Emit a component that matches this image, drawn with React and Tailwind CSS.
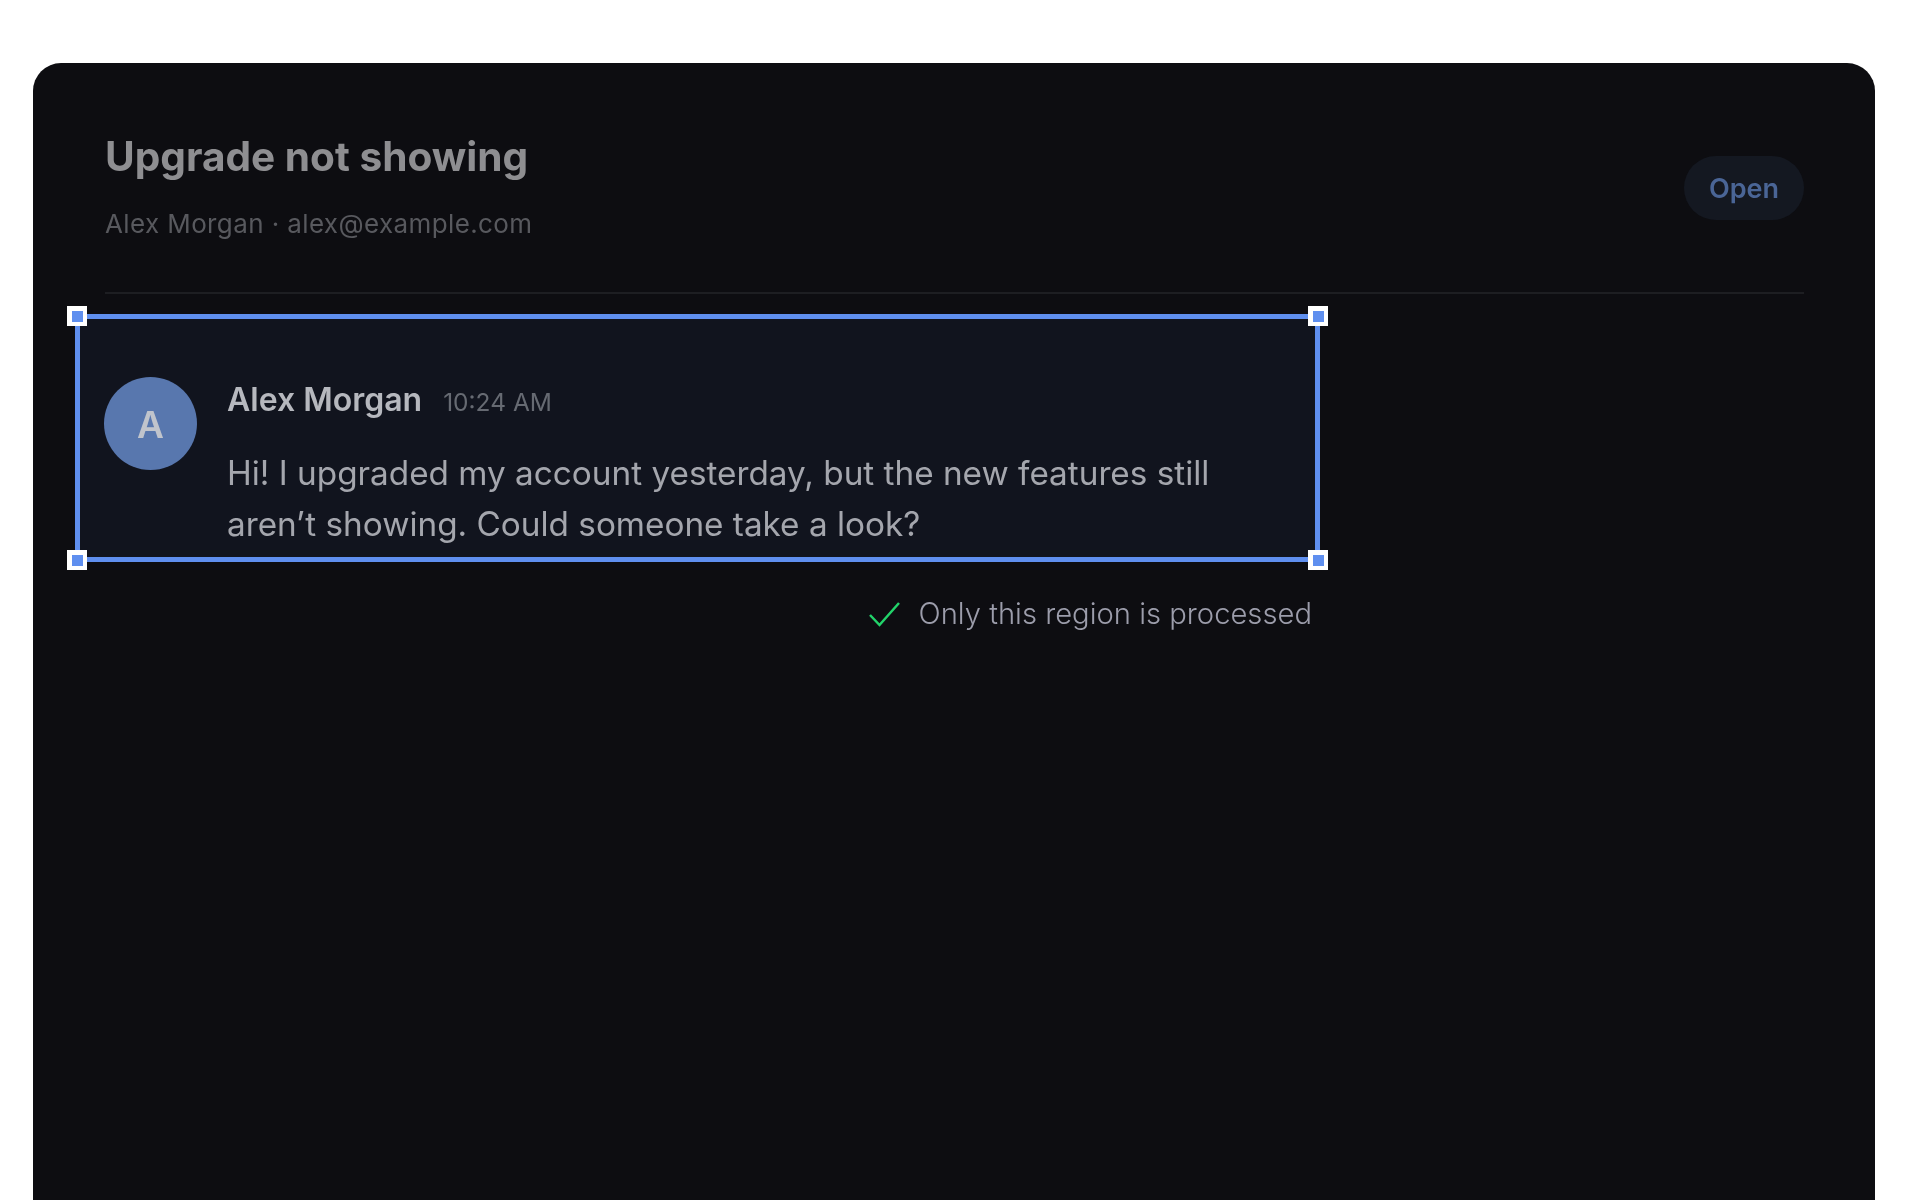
const font = { fontFamily: '"Inter", "Liberation Sans", sans-serif' };

function Handle({ className }) {
  return (
    <span className={`absolute flex h-5 w-5 items-center justify-center bg-white ${className}`}>
      <span className="h-[11px] w-[11px] bg-[#5f8fef]" />
    </span>
  );
}

export default function App() {
  return (
    <div style={font} className="h-[1200px] overflow-hidden bg-white pl-[33px] pr-[45px] pt-[63px] antialiased">
      <div className="h-[1137px] rounded-t-[28px] bg-[#0d0d11] pl-[72px] pr-[71px] pt-[70px] blur-[0.5px]">
        <header className="flex items-start justify-between">
          <div>
            <h1 className="text-[40.6px] leading-[48px] font-bold text-[#8e8e91]">Upgrade not showing</h1>
            <p className="mt-[27px] text-[26px] leading-8 tracking-[0.015em] text-[#58595e]">
              Alex Morgan · alex@example.com
            </p>
          </div>
          <span className="mt-[23px] flex h-16 w-[120px] items-center justify-center rounded-full bg-[#141821] pt-0.5 text-[27px] font-semibold text-[#4a6596]">
            Open
          </span>
        </header>
        <div className="mt-[52px] h-0.5 bg-[#1d1e22]" />
        <section className="-ml-[30px] mt-5 w-[1245px]">
          <div className="relative h-[248px] rounded-lg border-[5px] border-[#5f8fef] bg-[#11141e] pl-6 pt-[58px]">
            <Handle className="-left-[13px] -top-[13px]" />
            <Handle className="-right-[13px] -top-[13px]" />
            <Handle className="-left-[13px] -bottom-[13px]" />
            <Handle className="-right-[13px] -bottom-[13px]" />
            <div className="flex gap-[30px]">
              <div className="flex h-[93px] w-[93px] shrink-0 items-center justify-center rounded-full bg-[#5877ae] pt-0.5 text-[37px] font-semibold text-[#c0c4cc]">
                A
              </div>
              <div className="pt-[5px]">
                <div className="flex items-baseline gap-[21px]">
                  <span className="text-[32px] leading-9 font-semibold text-[#b6b8be]">Alex Morgan</span>
                  <span className="text-[24.5px] leading-9 text-[#666a72]">10:24 AM</span>
                </div>
                <p className="mt-[28px] max-w-[1040px] text-[33.3px] leading-[51px] text-[#a4a6ad]">
                  Hi! I upgraded my account yesterday, but the new features still aren’t showing. Could someone take a look?
                </p>
              </div>
            </div>
          </div>
          <div className="mt-[34px] flex items-center justify-end gap-[19px] pr-2">
            <svg width="32" height="26" viewBox="0 0 32 26" fill="none" className="text-[#22d36a]">
              <path d="M2 14 L11.5 24 L31 2" stroke="currentColor" strokeWidth="2.5" />
            </svg>
            <span className="text-[29.2px] leading-9 font-light text-[#9c9dab]">Only this region is processed</span>
          </div>
        </section>
      </div>
    </div>
  );
}
